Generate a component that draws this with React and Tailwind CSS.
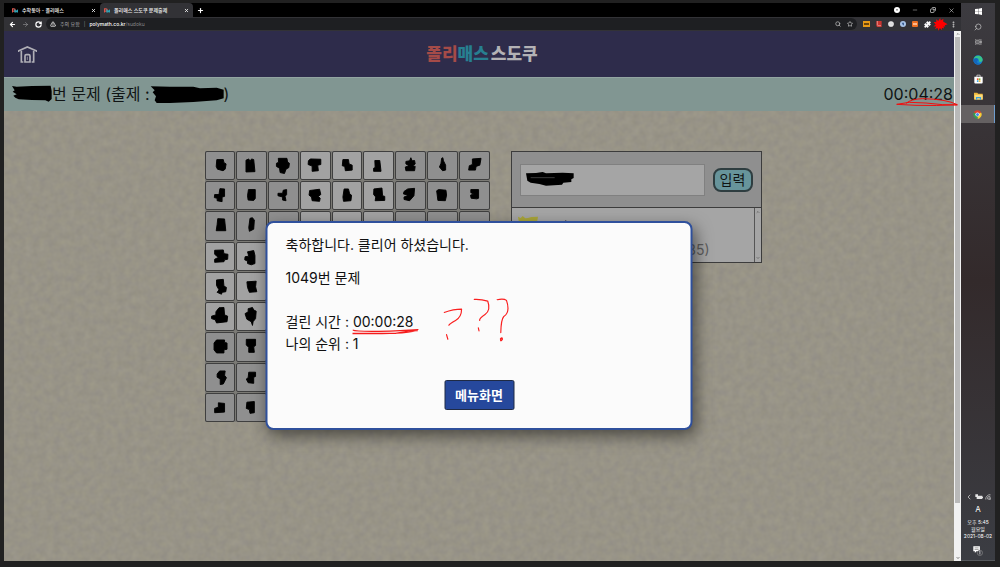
import React from "react";
import {
  ArrowLeft,
  ArrowRight,
  RotateCw,
  TriangleAlert,
  Search,
  Star,
  Plus,
  X,
  Minus,
  Copy,
  Puzzle,
  EllipsisVertical,
  ChevronLeft,
  ChevronUp,
  ChevronDown,
} from "lucide-react";

/* Ink blots covering the digits, in a 93 x 87 box per cell. */
const BLOTS = {
  "0-0": "M35 24 56 24 58 34 65 38 62 55 55 60 37 55 33 46Z",
  "0-1": "M29 26 38 22 42 30 47 22 54 24 58 63 29 64Z",
  "0-2": "M30 20 58 20 60 32 66 36 64 50 55 55 50 69 36 66 34 52 24 46 24 36 31 33Z",
  "0-3": "M30 22 64 23 64 40 54 42 56 60 36 62 36 45 23 40 24 28Z",
  "0-4": "M32 24 50 24 52 38 62 42 62 58 40 60 38 46 30 44Z",
  "0-5": "M35 27 51 27 55 62 31 62 31 52 36 50Z",
  "0-6": "M44 28 48 18 52 28 60 27 62 38 54 44 62 46 60 60 32 60 30 48 42 44 32 38 32 30Z",
  "0-7": "M44 20 48 18 50 28 57 42 57 58 47 60 37 48 42 36Z",
  "0-8": "M40 22 68 20 64 42 52 46 50 58 28 58 30 44 40 40Z",
  "1-0": "M45 21 60 22 60 46 52 48 52 63 36 60 36 52 27 50 28 40 42 40Z",
  "1-1": "M37 24 59 24 59 52 54 59 36 58 34 44Z",
  "1-2": "M29 36 44 36 46 26 57 24 57 40 52 46 55 60 44 58 44 48 29 44Z",
  "1-3": "M28 27 60 23 64 40 56 46 62 52 60 62 36 60 34 48 26 42Z",
  "1-4": "M36 22 50 22 54 38 60 42 58 60 34 62 32 48Z",
  "1-5": "M32 22 58 19 60 44 67 46 67 59 36 60 38 48 31 40Z",
  "1-6": "M26 30 38 22 60 20 58 44 44 60 26 56 26 48 40 42 24 38Z",
  "1-7": "M28 28 34 24 58 26 60 42 56 60 32 59Z",
  "1-8": "M35 24 60 24 60 52 54 54 36 52 34 42 44 38 35 34Z",
  "2-0": "M38 21 60 22 64 60 33 60 36 40Z",
  "2-1": "M42 20 50 18 56 26 54 55 40 62 38 50Z",
  "3-0": "M28 23 56 22 58 34 71 36 70 52 60 54 58 60 28 62 28 52 40 46 28 36Z",
  "3-1": "M34 28 54 24 58 40 58 66 46 70 34 66 34 58 25 54 26 44 38 42Z",
  "4-0": "M34 22 56 20 58 42 66 46 64 60 52 62 50 68 36 62 42 54 34 40Z",
  "4-1": "M32 28 62 26 60 44 64 60 40 62 34 46Z",
  "5-0": "M42 15 58 14 60 38 70 42 68 60 34 64 30 54 18 50 18 42 32 38 32 28Z",
  "5-1": "M36 18 50 14 54 22 62 26 60 50 52 60 50 72 46 60 32 52 26 34 36 28Z",
  "6-0": "M34 22 60 22 60 30 68 32 68 52 58 54 58 64 34 64 26 54 26 32Z",
  "6-1": "M30 20 60 20 60 40 54 44 56 62 38 62 38 46 30 38Z",
  "7-0": "M44 22 62 22 60 36 66 44 56 64 46 66 46 48 36 42 36 32Z",
  "7-1": "M38 26 60 26 60 40 54 42 54 62 36 60 30 48 36 44Z",
  "8-0": "M40 28 60 30 60 58 28 60 28 46 40 42Z",
  "8-1": "M32 26 56 24 56 60 42 62 40 50 30 46Z",
};

const ROWS = [0, 1, 2, 3, 4, 5, 6, 7, 8];

function SudokuCell({ row, col }) {
  const light = (Math.floor(row / 3) + Math.floor(col / 3)) % 2 === 1;
  const blot = BLOTS[row + "-" + col];
  return (
    <button
      type="button"
      aria-label={row + 1 + "-" + (col + 1)}
      className={
        "overflow-hidden rounded-xs border border-[#3f3f3f] " +
        (light ? "bg-[#a2a2a2]" : "bg-[#8f8f8f]")
      }
    >
      {blot && (
        <svg viewBox="0 0 93 87" className="block h-full w-full" aria-hidden="true">
          <path d={blot} fill="#000" stroke="#000" strokeWidth="3" strokeLinejoin="round" />
        </svg>
      )}
    </button>
  );
}

function PolyIcon() {
  return (
    <svg viewBox="0 0 18 14" className="h-[5px] w-[6px] shrink-0" aria-hidden="true">
      <path d="M1 13V2h5a3.500 3.500 0 0 1 0 7H3" fill="none" stroke="#d8554c" strokeWidth="4" />
      <path d="M9 13V7l3 3 4-3v6" fill="none" stroke="#2ba3b5" strokeWidth="4" />
    </svg>
  );
}

function Tab({ title, active }) {
  return (
    <div
      className={
        "flex h-3.5 items-center gap-1 rounded-t-sm px-1 " +
        (active ? "w-[93px] bg-[#323236]" : "w-24 pl-2")
      }
    >
      <PolyIcon />
      <button
        type="button"
        className="flex-1 whitespace-nowrap text-left text-[5px] font-medium leading-3 text-[#f0f0f0]"
      >
        {title}
      </button>
      <button type="button" aria-label="탭 닫기">
        <X className="size-[5px] text-[#f0f0f0]" strokeWidth={4} />
      </button>
    </div>
  );
}

function TabBar() {
  return (
    <div className="flex h-3.5 items-center bg-black">
      <Tab title="수학동아 - 폴리매스" />
      <Tab title="폴리매스 스도쿠 문제출제" active />
      <button type="button" aria-label="새 탭" className="ml-1">
        <Plus className="size-[7px] text-white" strokeWidth={4} />
      </button>
      <div className="ml-auto flex items-center gap-3 pr-1.5">
        <svg viewBox="0 0 12 12" className="size-[6px]" aria-hidden="true">
          <circle cx="6" cy="6" r="6" fill="#fff" />
          <path d="M4 5h4L6 7.500Z" fill="#111" />
        </svg>
        <button type="button" aria-label="최소화">
          <Minus className="size-[6px] text-[#c8c8c8]" />
        </button>
        <button type="button" aria-label="이전 크기로">
          <Copy className="size-[6px] rotate-90 text-[#c8c8c8]" strokeWidth={3} />
        </button>
        <button type="button" aria-label="닫기">
          <X className="size-[7px] text-[#c8c8c8]" />
        </button>
      </div>
    </div>
  );
}

function Toolbar() {
  return (
    <div className="flex h-3.5 items-center bg-[#323236]">
      <div className="flex items-center gap-1.5 pl-[5px]">
        <button type="button" aria-label="뒤로">
          <ArrowLeft className="size-[7px] text-white" strokeWidth={4} />
        </button>
        <button type="button" aria-label="앞으로">
          <ArrowRight className="size-[7px] text-[#9a9a9d]" strokeWidth={2} />
        </button>
        <button type="button" aria-label="새로고침">
          <RotateCw className="size-[7px] text-white" strokeWidth={4} />
        </button>
      </div>
      <div className="ml-1 flex h-3 flex-1 items-center gap-1 rounded-full bg-[#1e1f22] pl-1 pr-1 text-[5px] leading-3">
        <TriangleAlert className="size-[6px] text-[#c0c0c0]" strokeWidth={4} />
        <span className="text-[#a8a8ab]">주의 요함</span>
        <span className="text-[#88888b]">|</span>
        <button type="button" aria-label="주소" className="flex-1 text-left text-[#88888b]">
          <span className="font-medium text-white">polymath.co.kr</span>/sudoku
        </button>
        <button type="button" aria-label="확대" className="mr-0.5">
          <Search className="size-[6px] text-[#b8b8b8]" strokeWidth={3} />
        </button>
        <button type="button" aria-label="북마크">
          <Star className="size-[6px] text-[#b8b8b8]" strokeWidth={3} />
        </button>
      </div>
      <div className="flex items-center gap-1.5 pl-1.5 pr-1">
        <span className="flex h-[6px] w-[7px] items-center justify-center bg-[#e79a16]">
          <span className="h-0.5 w-[5px] bg-[#6b450a]" />
        </span>
        <svg viewBox="0 0 18 18" className="size-[6px]" aria-hidden="true">
          <path d="M1 0h16v18H4l-3-3Z" fill="#c9352f" />
          <path d="M4 0v12M4 14h11" stroke="#efb2ae" strokeWidth="2" />
        </svg>
        <svg viewBox="0 0 18 18" className="size-[6px]" aria-hidden="true">
          <circle cx="9" cy="9" r="8.500" fill="#f2f2f2" />
          <path d="M6 4v10M12 4v10" stroke="#999" strokeWidth="1.500" />
        </svg>
        <svg viewBox="0 0 18 18" className="size-[6px]" aria-hidden="true">
          <circle cx="9" cy="9" r="9" fill="#a8c4e6" />
          <path d="M5 5h7v8H9Z" fill="#3c5f92" />
        </svg>
        <span className="flex size-[6px] items-center justify-center rounded-[1px] bg-[#ea6f22]">
          <span className="h-0.5 w-1 bg-[#ffb98a]" />
        </span>
        <Puzzle className="size-[7px] text-white" fill="currentColor" />
        <svg viewBox="0 0 46 40" className="-mx-1 h-[13px] w-[15px]" aria-hidden="true">
          <path
            d="M2 12 10 12 10 4 16 9 22 0 24 8 32 2 31 11 36 14 45 19 36 22 38 26 32 26 34 32 27 30 28 38 21 31 17 39 14 31 6 34 10 26 1 26 8 20Z"
            fill="#f00"
          />
        </svg>
        <button type="button" aria-label="메뉴">
          <EllipsisVertical className="size-[7px] text-[#d0d0d0]" strokeWidth={4} />
        </button>
      </div>
    </div>
  );
}

function SiteHeader() {
  return (
    <header className="grid h-[46px] grid-cols-3 items-center bg-[#2e2c4b] px-3.5">
      <a href="#home" aria-label="홈" className="w-fit">
        <svg
          viewBox="0 0 57 51"
          className="h-[17px] w-[19px]"
          fill="none"
          stroke="#b0afb6"
          strokeWidth="5"
          aria-hidden="true"
        >
          <path d="M1 18V15L28 3 56 15V18" />
          <path d="M10 14V48h6M47 14V48h-6" />
          <path d="M21 48V30q0-4 4-4h7q4 0 4 4V48Z" />
          <path d="M28 32v10" strokeWidth="2" />
        </svg>
      </a>
      <h1 className="flex items-center justify-center gap-0.5 whitespace-nowrap pl-1.5 text-[17px] font-black leading-6">
        <span className="text-[#a54b48]">
          폴리<span className="text-[#277f90]">매스</span>
        </span>
        <span className="text-[#b3b2b5]">스도쿠</span>
      </h1>
    </header>
  );
}

function ProblemBar() {
  return (
    <div className="flex h-[34px] items-center border-t border-[#93a5a2] bg-[#819692] pb-0.5 text-base leading-6 text-[#101414]">
      <div className="flex items-center whitespace-nowrap pl-2">
        <svg viewBox="0 0 120 51" className="h-[17px] w-10" aria-hidden="true">
          <path
            d="M0 3 14 5 60 3 116 2 119 18 119 42 110 50 100 46 60 45 20 43 10 38 4 32 14 28 2 20 8 16Z"
            fill="#000"
          />
        </svg>
        <span>번 문제 (출제 :</span>
        <svg viewBox="0 0 222 54" className="h-[18px] w-[74px]" aria-hidden="true">
          <path
            d="M2 4 60 5 130 5 150 10 200 8 221 14 221 40 200 46 130 51 60 54 20 54 14 46 18 34 8 22 14 16Z"
            fill="#000"
          />
        </svg>
        <span>)</span>
      </div>
      <div className="relative ml-auto pr-px">
        <time>00:04:28</time>
        <svg
          viewBox="0 0 186 30"
          className="absolute -right-1 top-4 h-2.5 w-[62px]"
          fill="none"
          stroke="#f00f0f"
          strokeWidth="3"
          aria-hidden="true"
        >
          <path d="M30 16Q45 3 80 2 150 3 184 20 120 24 60 22L2 19 40 13 90 15 140 20 184 21" />
        </svg>
      </div>
    </div>
  );
}

function SubmitPanel() {
  return (
    <section className="w-[251px] border border-[#3c3c3c] bg-[#8f8f8f]">
      <form className="flex h-[55px] items-center gap-2 px-2" onSubmit={(e) => e.preventDefault()}>
        <div className="relative flex-1">
          <input
            type="text"
            aria-label="댓글"
            className="block h-8 w-full border border-[#808080] bg-[#a5a5a5] px-2"
          />
          <svg viewBox="0 0 144 42" className="absolute left-1.5 top-2 h-3.5 w-12" aria-hidden="true">
            <path
              d="M0 4 30 3 50 0 60 4 110 2 143 4 143 18 136 22 136 30 112 32 108 38 60 41 40 36 14 32 4 26Z"
              fill="#000"
            />
            <path d="M14 17 86 17" stroke="#777" strokeWidth="1.500" />
          </svg>
        </div>
        <button
          type="submit"
          className="h-6 w-10 rounded-lg border-2 border-[#2e3d40] bg-[#67949b] text-sm leading-5 text-[#101414]"
        >
          입력
        </button>
      </form>
      <div className="flex h-[55px] border-t border-[#3c3c3c] bg-[#a5a5a5]">
        <div className="flex flex-1 flex-col justify-between border-r border-[#555] pl-1.5 pr-11 pt-2">
          <svg viewBox="0 0 150 30" className="h-2.5 w-[50px]" aria-hidden="true">
            <path d="M0 2 8 6 14 0 22 7 30 6 40 3 60 2 56 24 4 26Z" fill="#aaa63a" />
            <path d="M106 16h16v10h-16ZM141 13h4v11h-4Z" fill="#555" />
          </svg>
          <span className="text-right text-sm leading-6 text-[#5e5e5e]">35)</span>
        </div>
        <div className="flex w-[6px] flex-col items-center justify-between py-0.5 text-[#555]" aria-hidden="true">
          <ChevronUp className="size-1" strokeWidth={4} />
          <ChevronDown className="size-1" strokeWidth={4} />
        </div>
      </div>
    </section>
  );
}

function ClearDialog() {
  return (
    <div
      role="dialog"
      aria-label="클리어"
      className="absolute left-1/2 top-[190px] w-[427px] -translate-x-1/2 rounded-lg border-2 border-[#2f509c] bg-[#fbfbfb] px-[18px] pb-[18px] pt-[11px] text-sm leading-[22px] text-[#101010] shadow-[3px_6px_16px_rgba(0,0,0,0.5)]"
    >
      <p>축하합니다. 클리어 하셨습니다.</p>
      <p className="mt-[11px]">1049번 문제</p>
      <div className="mt-[22px] flex">
        <div className="whitespace-nowrap">
          <p>
            걸린 시간 :{" "}
            <span className="relative inline-block">
              00:00:28
              <svg
                viewBox="0 0 200 18"
                className="absolute left-0 top-[18px] h-[6px] w-[66px]"
                fill="none"
                stroke="#f51c1c"
                strokeWidth="3.500"
                aria-hidden="true"
              >
                <path d="M0 3Q10 8 80 7T198 2Q190 9 150 12T20 14 130 13L170 6 198 5" />
              </svg>
            </span>
          </p>
          <p>나의 순위 : 1</p>
        </div>
        <div className="relative">
          <svg
            viewBox="0 0 200 140"
            className="absolute -top-[14px] left-[30px] h-[47px] w-[67px]"
            fill="none"
            stroke="#fa2020"
            strokeWidth="3.500"
            strokeLinecap="round"
            strokeLinejoin="round"
            aria-hidden="true"
          >
            <path d="M2 46Q30 36 54 36 54 60 36 70T16 84M9 112l4 14" />
            <path d="M92 7Q112 6 132 12 142 40 124 52T108 70M104 92l2 9" />
            <path d="M160 8Q180 4 188 10 200 45 180 58 172 66 171 106M170 124q6-6 6 2-5 8-6 2 2-7 5-1" />
          </svg>
        </div>
      </div>
      <div className="mt-[25px] flex justify-center">
        <button
          type="button"
          className="h-[30px] w-[70px] rounded-xs border border-[#1f2a44] bg-[#26489c] text-[13px] font-bold leading-5 text-white"
        >
          메뉴화면
        </button>
      </div>
    </div>
  );
}

function PageScrollbar() {
  return (
    <div className="flex w-[7px] shrink-0 flex-col items-center bg-[#f1f1f1] text-[#555]" aria-hidden="true">
      <span className="flex h-[6px] items-center">
        <ChevronUp className="size-1" strokeWidth={4} />
      </span>
      <span className="w-[5px] grow-[9] bg-[#b9b9b9]" />
      <span className="grow" />
      <span className="flex h-[6px] items-center">
        <ChevronDown className="size-1" strokeWidth={5} />
      </span>
    </div>
  );
}

function Taskbar() {
  return (
    <aside className="flex w-[34px] shrink-0 flex-col items-center border-b border-[#55585c] bg-linear-to-b from-[#3c3b40] via-[#332a2b] to-[#3b3d43] text-white">
      <div className="flex h-4 items-center">
        <svg viewBox="0 0 20 20" className="size-[7px]" fill="#fff" aria-hidden="true">
          <path d="M0 3 9 2v7H0ZM10 2 20 0v9H10ZM0 10h9v8l-9-1ZM10 10h10v10l-10-2Z" />
        </svg>
      </div>
      <div className="flex h-[15px] items-center">
        <Search className="size-[8px] -scale-x-100 text-[#cfcfcf]" />
      </div>
      <div className="flex h-4 items-center">
        <svg viewBox="0 0 22 20" className="h-[6px] w-[7px]" fill="none" stroke="#c4c4c4" strokeWidth="2" aria-hidden="true">
          <path d="M1 1v3h13V1M1 19v-3h13v3M1 7h13v6H1ZM19 0v20M17 8h4v4h-4Z" />
        </svg>
      </div>
      <div className="flex h-5 items-center">
        <svg viewBox="0 0 30 30" className="size-[10px]" aria-hidden="true">
          <circle cx="15" cy="15" r="14" fill="#1583d0" />
          <path d="M3 9A14 14 0 0 1 29 15q-1 6-8 6-5-1-3-5-1-7-9-7-4 0-6 3Z" fill="#38c487" />
          <path d="M1 14q4-6 10-4 5 2 4 6-4 1-2 7 5 4 10 3A14 14 0 0 1 1 14Z" fill="#1467bb" />
        </svg>
      </div>
      <div className="flex h-[17px] items-center">
        <svg viewBox="0 0 28 30" className="h-[10px] w-[9px]" aria-hidden="true">
          <path d="M9 9V3h10v6" fill="none" stroke="#fff" strokeWidth="2" />
          <path d="M1 8h26v18q0 3-3 3H4q-3 0-3-3Z" fill="#fff" />
          <path d="M9 13h5v5H9Z" fill="#e8502e" />
          <path d="M15 13h5v5h-5Z" fill="#7db928" />
          <path d="M9 19h5v5H9Z" fill="#2a9fe0" />
          <path d="M15 19h5v5h-5Z" fill="#f5b91f" />
        </svg>
      </div>
      <div className="flex h-[18px] items-center">
        <svg viewBox="0 0 28 24" className="h-[8px] w-[9px]" aria-hidden="true">
          <path d="M0 2h10l3 3h14v18H0Z" fill="#f0b93c" />
          <path d="M2 8h25v15H2Z" fill="#fbdc7d" />
          <path d="M6 24v-9h16v9h-4v-5h-8v5Z" fill="#3ba0dc" />
        </svg>
      </div>
      <div className="flex h-[18px] w-full items-center justify-center border-r border-[#6e9ccd] bg-[#656162]">
        <svg viewBox="0 0 30 30" className="size-[9px]" aria-hidden="true">
          <path d="M15 15 2.900 8A14 14 0 0 1 27.100 8Z" fill="#e0402f" />
          <path d="M15 15V1" stroke="#e0402f" strokeWidth="1" />
          <path d="M15 15 27.100 8A14 14 0 0 1 15 29Z" fill="#f7cc35" />
          <path d="M15 15V29A14 14 0 0 1 2.900 8Z" fill="#35a052" />
          <circle cx="15" cy="15" r="7" fill="#fff" />
          <circle cx="15" cy="15" r="5" fill="#4384ee" />
        </svg>
      </div>
      <div className="mt-auto flex items-center gap-0.5 text-[#e4e4e4]">
        <ChevronLeft className="size-[8px]" />
        <svg viewBox="0 0 24 18" className="h-[6px] w-[8px]" fill="currentColor" aria-hidden="true">
          <path d="M5 5h17v10H5ZM22 8h2v4h-2ZM1 1h8v5H6v3H1Z" />
        </svg>
        <svg
          viewBox="0 0 20 20"
          className="size-[6px]"
          fill="none"
          stroke="currentColor"
          strokeWidth="2"
          aria-hidden="true"
        >
          <path d="M2 18A16 16 0 0 1 18 2M7 18A11 11 0 0 1 18 7M12 18a6 6 0 0 1 6-6v6Z" />
        </svg>
      </div>
      <span className="mt-0.5 text-[8px] leading-3">A</span>
      <time className="mt-1 whitespace-nowrap text-center text-[5px] leading-[7px]">
        오후 5:45
        <br />
        월요일
        <br />
        2021-08-02
      </time>
      <svg viewBox="0 0 32 32" className="mb-1 mt-1.5 size-[10px]" aria-hidden="true">
        <path d="M1 1h21v16H11l-5 5v-5H1Z" fill="#fff" />
        <path d="M5 6h13M5 11h13" stroke="#666" strokeWidth="2" />
        <circle cx="22" cy="22" r="8.500" fill="#3b3d43" stroke="#aaa" strokeWidth="1.500" />
        <path d="M20 19l2-2v10" fill="none" stroke="#fff" strokeWidth="2" />
      </svg>
    </aside>
  );
}

function PaperGrain() {
  return (
    <svg className="pointer-events-none absolute inset-0 h-full w-full opacity-15" aria-hidden="true">
      <filter id="grain" colorInterpolationFilters="sRGB">
        <feTurbulence type="fractalNoise" baseFrequency="0.14" numOctaves="2" seed="4" />
        <feColorMatrix type="matrix" values="0.4 0 0 0 0.4  0.4 0 0 0 0.38  0.2 0.2 0 0 0.34  0 0 0 0 1" />
      </filter>
      <rect width="100%" height="100%" filter="url(#grain)" />
    </svg>
  );
}

export default function App() {
  return (
    <div className="flex min-h-screen bg-[#212121] pb-1.5 pl-1 pr-[5px] pt-[3px] font-[Inter,'Noto_Sans_CJK_KR',sans-serif]">
      <div className="flex min-w-0 flex-1 flex-col">
        <TabBar />
        <Toolbar />
        <div className="flex flex-1">
          <div className="relative flex min-w-0 flex-1 flex-col">
            <SiteHeader />
            <ProblemBar />
            <main className="relative flex-1 bg-[#989487] pt-10">
              <PaperGrain />
              <div className="relative flex items-start justify-center gap-[21px] pl-2">
                <div className="grid h-[271px] w-[285px] grid-cols-9 grid-rows-9 gap-px bg-[#7b7a75]">
                  {ROWS.map((row) =>
                    ROWS.map((col) => <SudokuCell key={row + "-" + col} row={row} col={col} />)
                  )}
                </div>
                <SubmitPanel />
              </div>
            </main>
            <ClearDialog />
          </div>
          <PageScrollbar />
        </div>
      </div>
      <Taskbar />
    </div>
  );
}
